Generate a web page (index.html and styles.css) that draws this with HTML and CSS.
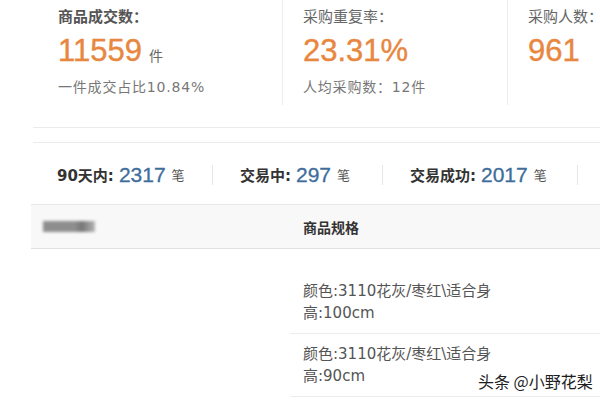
FILE: index.html
```html
<!DOCTYPE html>
<html lang="zh">
<head>
<meta charset="utf-8">
<link rel="stylesheet" href="styles.css">
</head>
<body>
<div class="page">
  <div class="cards">
    <div class="card card-first">
      <div class="label">商品成交数：</div>
      <div class="value"><span class="num">11559</span><span class="unit">件</span></div>
      <div class="sub">一件成交占比10.84%</div>
    </div>
    <div class="card">
      <div class="label">采购重复率：</div>
      <div class="value"><span class="num">23.31%</span></div>
      <div class="sub">人均采购数：12件</div>
    </div>
    <div class="card card-last">
      <div class="label">采购人数：</div>
      <div class="value"><span class="num">961</span></div>
    </div>
  </div>

  <div class="band"></div>

  <div class="stats">
    <div class="stat stat-1"><span class="s-label">90天内:</span><span class="s-num">2317</span><span class="s-unit">笔</span></div>
    <div class="stat stat-2"><span class="s-label">交易中:</span><span class="s-num">297</span><span class="s-unit">笔</span></div>
    <div class="stat stat-3"><span class="s-label">交易成功:</span><span class="s-num">2017</span><span class="s-unit">笔</span></div>
    <div class="stat stat-4"></div>
  </div>

  <div class="thead">
    <div class="th-blur"></div>
    <div class="th-spec">商品规格</div>
  </div>

  <div class="rows">
    <div class="row row-first">
      <div class="spec">颜色:3110花灰/枣红\适合身<br>高:100cm</div>
    </div>
    <div class="row">
      <div class="spec">颜色:3110花灰/枣红\适合身<br>高:90cm</div>
    </div>
  </div>

  <div class="watermark">头条 @小野花梨</div>
</div>
</body>
</html>
```

FILE: styles.css
```css
html, body {
  margin: 0;
  padding: 0;
  background: #ffffff;
}

.page {
  position: relative;
  width: 600px;
  height: 400px;
  overflow: hidden;
  font-family: "Noto Sans CJK SC", sans-serif;
  color: #555;
}

.cards {
  display: flex;
  margin-left: 38px;
  height: 105px;
}

.card {
  flex: 0 0 225px;
  box-sizing: border-box;
  padding: 6px 0 0 20px;
  border-right: 1px solid #ececec;
  white-space: nowrap;
}

.card-first {
  flex-basis: 245px;
}

.card-last {
  flex: 1 1 auto;
  border-right: none;
}

.card-last .label {
  font-feature-settings: "halt" 1;
}

.label {
  font-size: 15px;
  line-height: 20px;
  font-weight: normal;
  color: #666;
  white-space: nowrap;
}

.card-first .label {
  font-weight: bold;
  color: #555;
}

.value {
  margin-top: 7px;
  height: 36px;
  line-height: 36px;
  white-space: nowrap;
}

.num {
  font-family: "Liberation Sans", sans-serif;
  font-size: 31px;
  color: #e8873f;
  -webkit-text-stroke: 0.4px #e8873f;
}

.unit {
  margin-left: 7px;
  font-size: 14px;
  color: #666;
}

.sub {
  margin-top: 8px;
  font-family: "DejaVu Sans", "Noto Sans CJK SC", sans-serif;
  font-size: 14px;
  line-height: 20px;
  color: #777;
  letter-spacing: 0.8px;
}

.band {
  margin: 22px 0 0 33px;
  height: 14px;
  border-top: 1px solid #ebebeb;
  border-bottom: 1px solid #ebebeb;
}

.stats {
  display: flex;
  align-items: center;
  margin-left: 33px;
  height: 61px;
  padding-top: 2px;
  box-sizing: border-box;
}

.stat {
  box-sizing: border-box;
  height: 20px;
  display: flex;
  align-items: center;
  border-right: 1px solid #e6e6e6;
  white-space: nowrap;
  flex-shrink: 0;
}

.stat-1 { width: 180px; padding-left: 24px; }
.stat-2 { width: 170px; padding-left: 27px; }
.stat-3 { width: 195px; padding-left: 27px; }
.stat-4 { flex: 1; border-right: none; }

.s-label {
  font-family: "DejaVu Sans", "Noto Sans CJK SC", sans-serif;
  font-size: 15px;
  font-weight: bold;
  color: #333;
}

.s-num {
  margin-left: 5px;
  font-family: "Liberation Sans", sans-serif;
  font-size: 21px;
  color: #3e6d9c;
  -webkit-text-stroke: 0.3px #3e6d9c;
}

.s-unit {
  margin-left: 6px;
  font-size: 13px;
  color: #555;
}

.thead {
  display: flex;
  align-items: center;
  margin-left: 31px;
  height: 43px;
  background: #f8f8f8;
  border-top: 1px solid #e8e8e8;
  border-bottom: 1px solid #e2e2e2;
}

.th-blur {
  width: 52px;
  height: 11px;
  margin-left: 12px;
  background: linear-gradient(90deg, #8e8e8e 0%, #8e8e8e 60%, #777 75%, #b5b5b5 100%);
  filter: blur(1.5px);
}

.th-spec {
  margin-left: 208px;
  font-size: 14px;
  font-weight: bold;
  color: #333;
}

.rows {
  margin-left: 290px;
}

.row {
  padding: 9px 0 9px 13px;
  border-bottom: 1px solid #ececec;
}

.row-first {
  padding-top: 31px;
}

.spec {
  font-family: "DejaVu Sans", "Noto Sans CJK SC", sans-serif;
  font-size: 15px;
  line-height: 22px;
  color: #555;
}

.watermark {
  position: absolute;
  left: 478px;
  top: 370px;
  font-size: 16px;
  line-height: 22px;
  color: #1e1e1e;
  text-shadow: 0 0 2px #fff, 0 0 2px #fff;
  white-space: nowrap;
}
```
